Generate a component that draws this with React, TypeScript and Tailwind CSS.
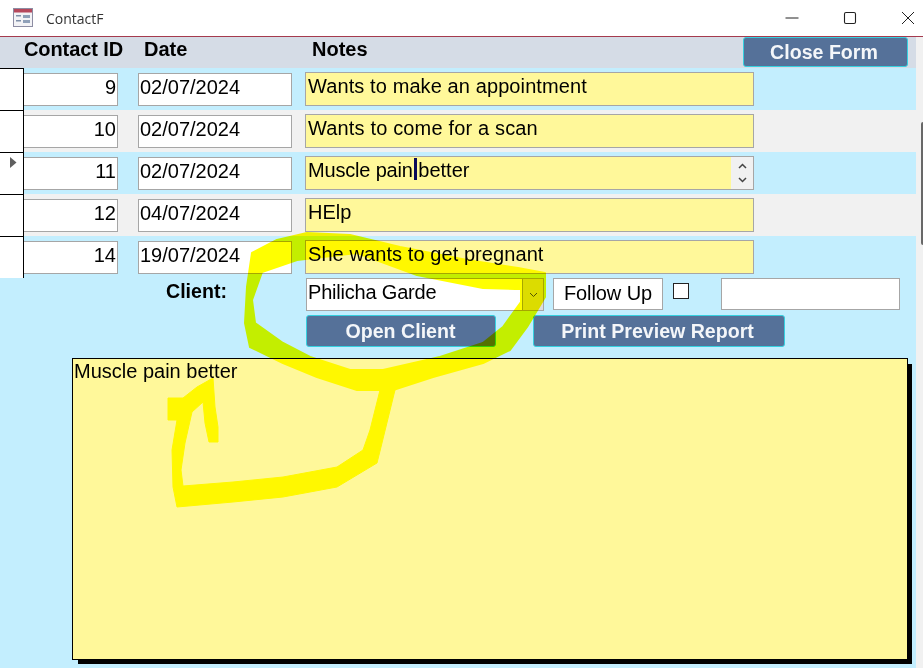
const font = "font-['Liberation_Sans',Arial,sans-serif]";

function Field({ className = "", children }: { className?: string; children?: React.ReactNode }) {
  return <div className={`border border-[#a6a6a6] text-[20px] leading-[26px] text-black ${className}`}>{children}</div>;
}

const rows = [
  { id: "9", date: "02/07/2024", note: "Wants to make an appointment", bg: "bg-[#c3eefe]", track: "tracking-[0.1px]" },
  { id: "10", date: "02/07/2024", note: "Wants to come for a scan", bg: "bg-[#f1f1f1]", track: "tracking-[0.16px]" },
  { id: "11", date: "02/07/2024", note: "Muscle pain better", bg: "bg-[#c3eefe]", track: "", current: true },
  { id: "12", date: "04/07/2024", note: "HElp", bg: "bg-[#f1f1f1]", track: "" },
  { id: "14", date: "19/07/2024", note: "She wants to get pregnant", bg: "bg-[#c3eefe]", track: "tracking-[0.08px]" },
];

function Row({ row }: { row: (typeof rows)[number] }) {
  return (
    <div className={`flex h-[42px] ${row.bg}`}>
      <div className="flex h-[42px] w-[24px] shrink-0 items-start border-r border-t border-black bg-white pl-[10px] pt-[4px]">
        {row.current && (
          <svg width="7" height="11" viewBox="0 0 7 11">
            <path d="M0 0L6.5 5.5L0 11Z" fill="#5f5f5f" />
          </svg>
        )}
      </div>
      <div className="flex items-start pt-[5px]">
        <Field className="h-[33px] w-[94px] border-l-0 bg-white pr-[1px] text-right">{row.id}</Field>
        <Field className="ml-[20px] h-[33px] w-[154px] bg-white pl-[1px]">{row.date}</Field>
        {row.current ? (
          <Field className="relative ml-[13px] -mt-[1px] h-[34px] w-[449px] bg-[#fff89a] pl-[2px]">
            <span className="tracking-[-0.18px]">Muscle pain</span>
            <span className="relative inline-block h-0 w-0">
              <span className="absolute -top-[19px] left-[1px] h-[22px] w-[3px] bg-[#0b0b5a]" />
            </span>{" "}
            better
            <span className="absolute right-0 top-0 flex h-full w-[22px] flex-col items-center justify-center gap-[8px] bg-[#f1f1f1]">
              <svg width="9" height="6" viewBox="0 0 9 6"><path d="M1 5L4.5 1.5L8 5" fill="none" stroke="#444" strokeWidth="1.5" /></svg>
              <svg width="9" height="6" viewBox="0 0 9 6"><path d="M1 1L4.5 4.5L8 1" fill="none" stroke="#444" strokeWidth="1.5" /></svg>
            </span>
          </Field>
        ) : (
          <Field className={`ml-[13px] -mt-[1px] h-[34px] w-[449px] bg-[#fff89a] pl-[2px] ${row.track}`}>{row.note}</Field>
        )}
      </div>
    </div>
  );
}

function ActionButton({ className = "", children }: { className?: string; children: React.ReactNode }) {
  return (
    <div className={`flex items-center justify-center rounded-[3px] border border-[#35d0e0] bg-[#557199] text-[19.6px] font-bold text-[#f4f6f9] ${className}`}>
      {children}
    </div>
  );
}

export default function App() {
  return (
    <div className={`relative h-[668px] w-[923px] overflow-hidden bg-white ${font}`}>
      {/* Title bar */}
      <div className="flex h-[37px] items-center border-b border-[#a53a4e] bg-white">
        <svg className="ml-[13px] mb-[2px]" width="20" height="19" viewBox="0 0 20 19">
          <rect x="0.5" y="0.5" width="19" height="18" fill="#f3f3f6" stroke="#8d8da3" />
          <rect x="1" y="1" width="18" height="3.5" fill="#b6485c" />
          <rect x="3" y="7" width="5" height="1.5" fill="#7f8fa8" />
          <rect x="3" y="12" width="5" height="1.5" fill="#7f8fa8" />
          <rect x="10" y="7" width="7" height="3" fill="#8fa0b8" />
          <rect x="10" y="12" width="7" height="3" fill="#8fa0b8" />
        </svg>
        <span className="ml-[13px] font-['Open_Sans',sans-serif] text-[14px] text-[#333]">ContactF</span>
        <div className="ml-auto flex items-center">
          <svg width="14" height="14" viewBox="0 0 14 14" className="mr-[44px]">
            <path d="M0.5 7H13.5" stroke="#222" strokeWidth="1" />
          </svg>
          <svg width="14" height="14" viewBox="0 0 14 14" className="mr-[44px]">
            <rect x="1.5" y="1.5" width="11" height="11" rx="1.5" fill="none" stroke="#222" strokeWidth="1.1" />
          </svg>
          <svg width="14" height="14" viewBox="0 0 14 14" className="mr-[8px]">
            <path d="M1 1L13 13M13 1L1 13" stroke="#222" strokeWidth="1" />
          </svg>
        </div>
      </div>

      <div className="flex h-[631px]">
        {/* Form body */}
        <div className="flex w-[916px] shrink-0 flex-col bg-[#c3eefe]">
          {/* Header */}
          <div className="flex h-[31px] bg-[#d5dce6] text-[20px] font-bold leading-[24px] text-black">
            <span className="ml-[24px] w-[120px] tracking-[-0.1px]">Contact ID</span>
            <span className="w-[168px]">Date</span>
            <span className="w-[431px]">Notes</span>
            <ActionButton className="h-[30px] w-[165px] pr-[3px]">Close Form</ActionButton>
          </div>

          {rows.map((r) => (
            <Row key={r.id} row={r} />
          ))}

          {/* Client line */}
          <div className="flex h-[37px] items-start pl-[166px]">
            <span className="w-[140px] text-[19.6px] font-bold leading-[26px] text-black">Client:</span>
            <div className="flex h-[33px] w-[238px] items-start border border-[#a6a6a6] bg-white pl-[1px] text-[20px] leading-[26px] tracking-[-0.2px] text-black">
              Philicha Garde
              <span className="ml-auto flex h-full w-[21px] items-center justify-center border-l border-[#a6a6a6] bg-[#dcdcdc]">
                <svg width="9" height="6" viewBox="0 0 9 6"><path d="M1 1L4.5 4.5L8 1" fill="none" stroke="#555" strokeWidth="1" /></svg>
              </span>
            </div>
            <div className="ml-[9px] flex h-[32px] w-[110px] items-center justify-center border border-[#a6a6a6] bg-white pb-[3px] text-[20px] tracking-[-0.1px] text-black">
              Follow Up
            </div>
            <div className="ml-[10px] mt-[5px] h-[16px] w-[16px] border border-[#222] bg-white" />
            <div className="ml-[32px] h-[32px] w-[179px] border border-[#a6a6a6] bg-white" />
          </div>

          {/* Buttons */}
          <div className="flex pl-[306px]">
            <ActionButton className="h-[32px] w-[190px] pr-[1px] pt-[1px]">Open Client</ActionButton>
            <ActionButton className="ml-[37px] h-[32px] w-[252px] pr-[3px] pt-[1px]">Print Preview Report</ActionButton>
          </div>

          {/* Large note */}
          <div className="ml-[72px] mt-[11px] h-[302px] w-[836px] border border-black bg-[#fff89a] pl-[1px] text-[20px] leading-[24px] text-black shadow-[5px_5px_0_-1px_#000]">
            Muscle pain better
          </div>
        </div>

        {/* Scrollbar */}
        <div className="flex w-[7px] flex-col bg-[#f1f1f1] pt-[85px]">
          <div className="ml-[5px] h-[123px] w-[2px] rounded-l-[2px] bg-[#686868]" />
        </div>
      </div>

      {/* Marker scribble */}
      <svg className="pointer-events-none absolute left-0 top-0 mix-blend-multiply" width="923" height="668" viewBox="0 0 923 668">
        <path
          fill="#ffff00"
          stroke="#ffff00"
          strokeWidth="2"
          strokeLinejoin="round"
          fillRule="evenodd"
          d="M518 268L545 273L545 297L527 327L510 350L483 363L433 377L393 390L357 390L317 377L283 363L250 347L245 323L247 287L252 253L277 240L307 233L350 235L400 247L467 260Z M515 289L483 288L417 275L357 253L297 260L262 272L252 300L255 323L283 343L310 357L350 370L383 370L440 357L483 343L503 327L521 302L521 289Z"
        />
        <path
          fill="#ffff00"
          stroke="#ffff00"
          strokeWidth="1"
          strokeLinejoin="round"
          d="M395 390L381 447L377 463L337 487L283 497L233 502L177 507L173 487L172 450L177 420L168 420L168 398L183 398L197 387L213 378L215 407L218 427L218 442L209 442L205 423L203 402L192 412L185 443L181 470L183 486L233 482L283 477L337 467L363 450L370 430L380 390Z"
        />
      </svg>
    </div>
  );
}
